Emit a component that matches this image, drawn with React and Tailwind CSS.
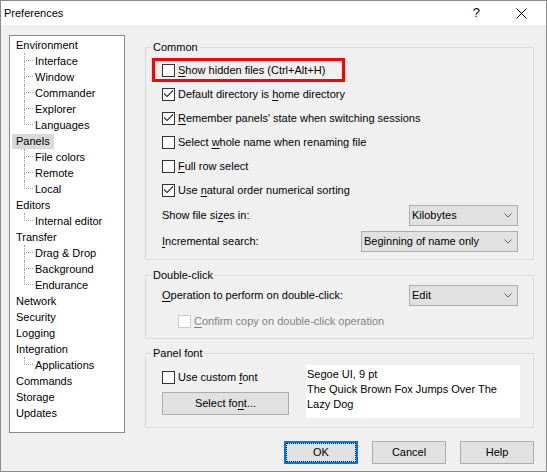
import React from "react";

const tree = [
  { label: "Environment", children: ["Interface", "Window", "Commander", "Explorer", "Languages"] },
  { label: "Panels", selected: true, children: ["File colors", "Remote", "Local"] },
  { label: "Editors", children: ["Internal editor"] },
  { label: "Transfer", children: ["Drag & Drop", "Background", "Endurance"] },
  { label: "Network" },
  { label: "Security" },
  { label: "Logging" },
  { label: "Integration", children: ["Applications"] },
  { label: "Commands" },
  { label: "Storage" },
  { label: "Updates" },
];

const Key = ({ children }) => <span className="underline underline-offset-[2px]">{children}</span>;

const CheckBox = ({ checked, disabled }) => (
  <span
    className={`w-[13px] h-[13px] shrink-0 border bg-white flex items-center justify-center ${
      disabled ? "border-[#cccccc]" : "border-[#333333]"
    }`}
  >
    {checked && (
      <svg width="11" height="11" viewBox="0 0 11 11">
        <path d="M1 4.5 L4 7.5 L10 1.5" fill="none" stroke="#333333" strokeWidth="1.1" />
      </svg>
    )}
  </span>
);

const CheckRow = ({ checked, disabled, children }) => (
  <div className="h-[24px] flex items-center pl-[16px]">
    <CheckBox checked={checked} disabled={disabled} />
    <span className={`ml-[3px] ${disabled ? "text-[#838383]" : ""}`}>{children}</span>
  </div>
);

const Combo = ({ value, className }) => (
  <div
    className={`h-[21px] bg-[#e1e1e1] border border-[#adadad] flex items-center justify-between pl-[2px] pr-[5px] ${className}`}
  >
    <span>{value}</span>
    <svg width="8" height="5" viewBox="0 0 8 5">
      <path d="M0.5 0.5 L4 4 L7.5 0.5" fill="none" stroke="#606060" />
    </svg>
  </div>
);

const Group = ({ title, className, children }) => (
  <fieldset className={`border border-[#dcdcdc] ${className}`}>
    <legend className="ml-[6px] px-[1px] leading-[16px]">{title}</legend>
    {children}
  </fieldset>
);

const Button = ({ children, focused }) => (
  <button
    className={`w-[74px] h-[23px] bg-[#e1e1e1] flex items-center justify-center ${
      focused ? "border-2 border-[#0078d7]" : "border border-[#adadad]"
    }`}
  >
    {focused ? (
      <span className="w-full h-full border border-dotted border-black flex items-center justify-center">
        {children}
      </span>
    ) : (
      children
    )}
  </button>
);

// one child row of the tree, with its dotted connector
const Branch = ({ label, last }) => (
  <div className="h-[16px] flex items-center ml-[14px]">
    <span className="w-[9px] h-[16px] flex flex-col shrink-0">
      <span className="h-[8px] border-l border-b border-dotted border-[#a0a0a0]" />
      <span className={`h-[8px] ${last ? "" : "border-l border-dotted border-[#a0a0a0]"}`} />
    </span>
    <span className="pl-[2px] leading-[16px] whitespace-nowrap">{label}</span>
  </div>
);

const TreeView = () => (
  <div className="w-[116px] h-[398px] shrink-0 border border-[#828790] bg-white pt-[1px]">
    {tree.map((node) => (
      <div key={node.label}>
        <div className="h-[16px] flex items-center">
          <span className={`ml-[2px] px-[4px] leading-[15px] ${node.selected ? "bg-[#d9d9d9]" : ""}`}>
            {node.label}
          </span>
        </div>
        {node.children?.map((c, i) => (
          <Branch key={c} label={c} last={i === node.children.length - 1} />
        ))}
      </div>
    ))}
  </div>
);

export default function App() {
  return (
    <div className="w-[547px] h-[472px] border border-[#8c8c8c] bg-[#f0f0f0] flex flex-col text-[11px] text-black font-['Liberation_Sans',Arial,sans-serif] select-none">
      <div className="h-[24px] bg-white flex items-center pl-[3px] shrink-0">
        <span>Preferences</span>
        <span className="ml-auto text-[13px] mr-[36px]">?</span>
        <svg className="mr-[19px]" width="11" height="11" viewBox="0 0 11 11">
          <path d="M0.5 0.5 L10.5 10.5 M10.5 0.5 L0.5 10.5" stroke="#000" strokeWidth="1" />
        </svg>
      </div>

      <div className="flex pl-[8px] pt-[10px]">
        <TreeView />

        <div className="ml-[20px] w-[389px] pt-[4px] flex flex-col">
          <Group title="Common" className="pb-[5px]">
            <div className="pt-[3px]">
              <div className="ml-[6px] w-[193px] h-[24px] border-[3px] border-[#ff0000] flex items-center pl-[7px]">
                <CheckBox />
                <span className="ml-[3px]">
                  <Key>S</Key>how hidden files (Ctrl+Alt+H)
                </span>
              </div>
              <CheckRow checked>
                Default directory is <Key>h</Key>ome directory
              </CheckRow>
              <CheckRow checked>
                <Key>R</Key>emember panels' state when switching sessions
              </CheckRow>
              <CheckRow>
                Select <Key>w</Key>hole name when renaming file
              </CheckRow>
              <CheckRow>
                <Key>F</Key>ull row select
              </CheckRow>
              <CheckRow checked>
                Use <Key>n</Key>atural order numerical sorting
              </CheckRow>
              <div className="h-[26px] flex items-center justify-between pl-[16px] pr-[15px]">
                <span>
                  Show file si<Key>z</Key>es in:
                </span>
                <Combo value="Kilobytes" className="w-[109px]" />
              </div>
              <div className="h-[26px] flex items-center justify-between pl-[16px] pr-[15px]">
                <span>
                  <Key>I</Key>ncremental search:
                </span>
                <Combo value="Beginning of name only" className="w-[157px]" />
              </div>
            </div>
          </Group>

          <Group title="Double-click" className="mt-[7px] pb-[5px]">
            <div className="h-[24px] flex items-center justify-between pl-[16px] pr-[15px]">
              <span>
                <Key>O</Key>peration to perform on double-click:
              </span>
              <Combo value="Edit" className="w-[109px]" />
            </div>
            <div className="mt-[2px] pl-[16px]">
              <CheckRow disabled>
                <Key>C</Key>onfirm copy on double-click operation
              </CheckRow>
            </div>
          </Group>

          <Group title="Panel font" className="mt-[6px] pb-[9px]">
            <div className="flex pt-[4px] pl-[16px]">
              <div className="w-[127px] flex flex-col">
                <div className="h-[24px] flex items-center">
                  <CheckBox />
                  <span className="ml-[3px]">
                    Use custom <Key>f</Key>ont
                  </span>
                </div>
                <button className="mt-[3px] w-[127px] h-[23px] bg-[#e1e1e1] border border-[#adadad]">
                  Select fo<Key>n</Key>t...
                </button>
              </div>
              <div className="ml-[17px] w-[214px] h-[53px] bg-white px-[1px] pt-[2px] leading-[15px]">
                <div>Segoe UI, 9 pt</div>
                <div>The Quick Brown Fox Jumps Over The Lazy Dog</div>
              </div>
            </div>
          </Group>

          <div className="mt-[13px] flex justify-end gap-[14px]">
            <Button focused>OK</Button>
            <Button>Cancel</Button>
            <Button>Help</Button>
          </div>
        </div>
      </div>
    </div>
  );
}
